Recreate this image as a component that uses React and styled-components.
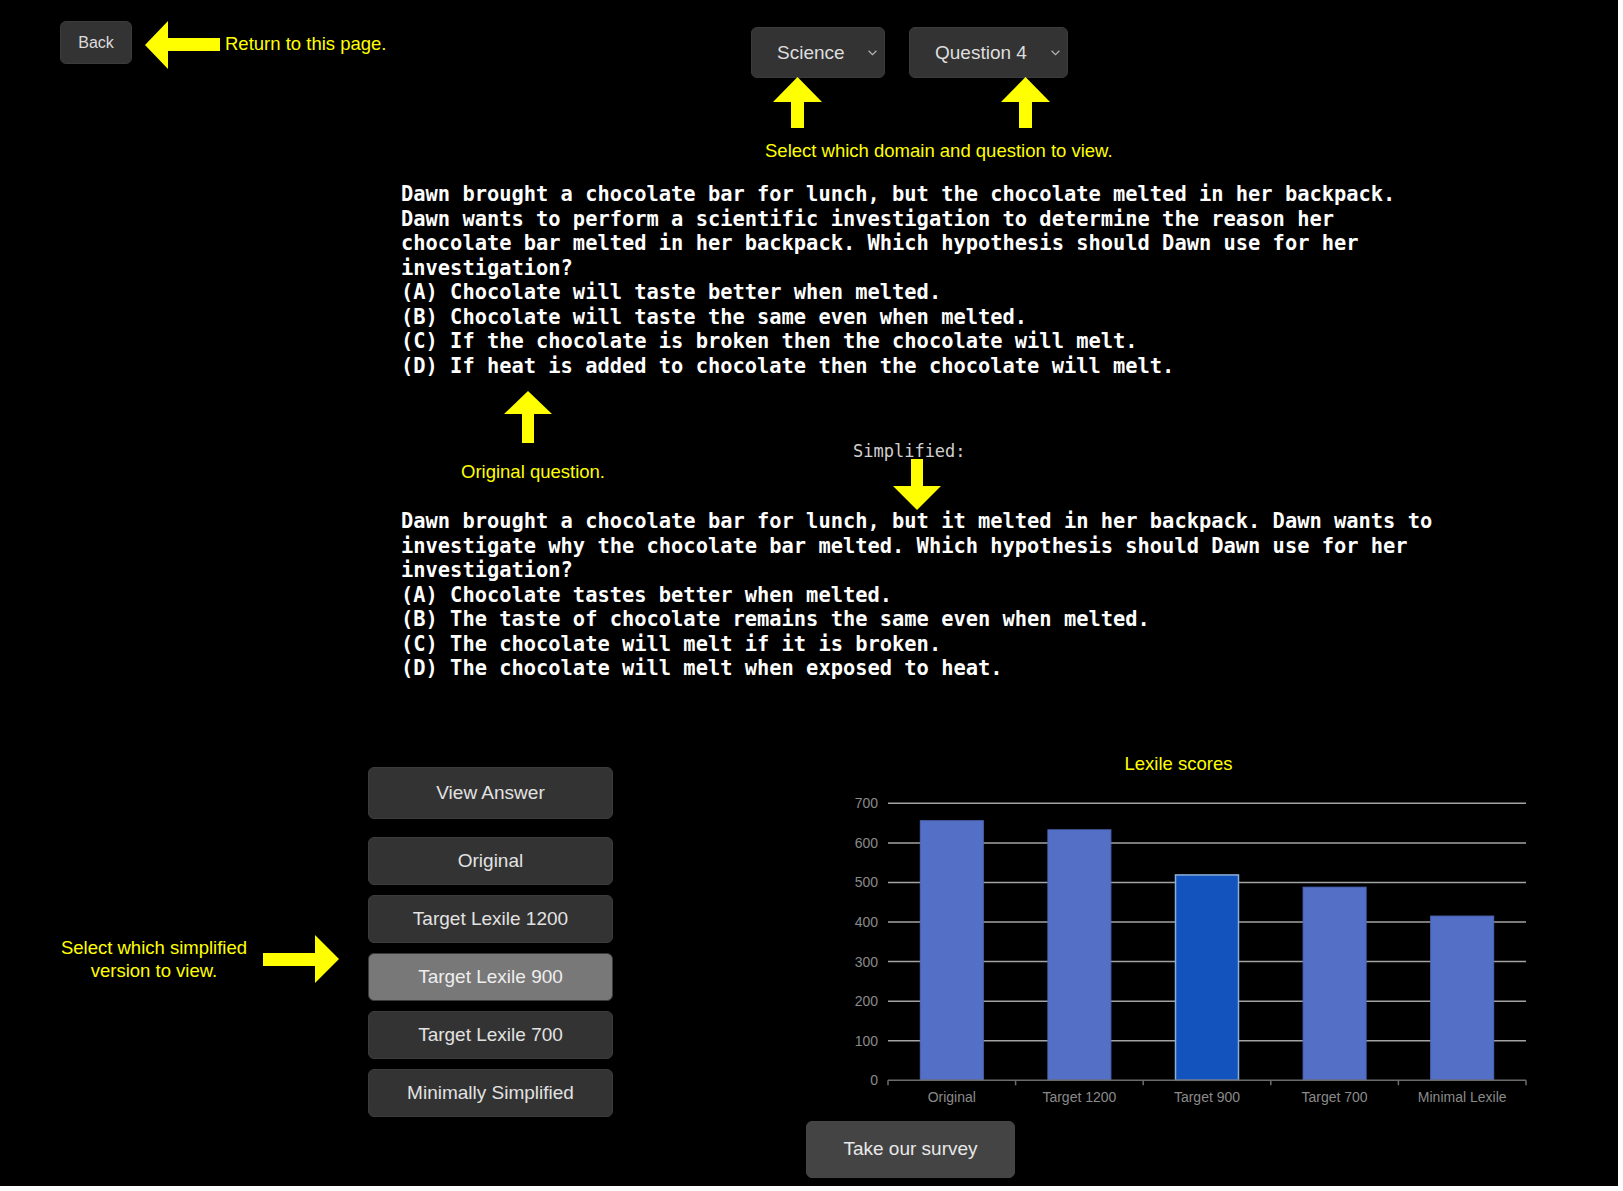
import React from "react";
import styled, { createGlobalStyle } from "styled-components";

const YELLOW = "#ffff00";

const GlobalStyle = createGlobalStyle`
  html, body { margin: 0; padding: 0; background: #ffffff; }
  #root { width: 1623px; }
  * { box-sizing: border-box; }
`;

const Page = styled.div`
  width: 1618px;
  height: 1186px;
  background: #000;
  font-family: "Liberation Sans", Arial, sans-serif;
  overflow: hidden;
  display: flex;
  flex-direction: column;
`;

const Header = styled.header`
  display: grid;
  grid-template-columns: 751px auto;
  align-items: start;
  height: 182px;
  padding-top: 21px;
`;

const BackNote = styled.div`
  display: flex;
  align-items: flex-start;
  padding-left: 60px;
`;

const DarkButton = styled.button`
  display: flex;
  align-items: center;
  justify-content: center;
  border: 1px solid #3b3b3b;
  border-radius: 6px;
  background: ${(p) => (p.$active ? "#787878" : "#333333")};
  color: #e2e2e2;
  font-family: "Liberation Sans", Arial, sans-serif;
  padding: 0;
  cursor: pointer;
`;

const BackButton = styled(DarkButton)`
  width: 72px;
  height: 43px;
  font-size: 16px;
  color: #dcdcdc;
`;

const Note = styled.span`
  color: ${YELLOW};
  font-size: 18.5px;
  line-height: 21px;
  white-space: nowrap;
`;

const ReturnNote = styled(Note)`
  margin-left: 5px;
  margin-top: 12px;
`;

const ArrowSvg = styled.svg`
  display: block;
  flex: none;
  fill: ${YELLOW};
  margin-left: ${(p) => p.$ml || 0}px;
  margin-top: ${(p) => p.$mt || 0}px;
`;

const SelectsColumn = styled.div`
  display: flex;
  flex-direction: column;
  margin-top: 6px;
`;

const SelectRow = styled.div`
  display: flex;
  gap: 24px;
`;

const Select = styled(DarkButton)`
  width: ${(p) => p.$w}px;
  height: 51px;
  justify-content: space-between;
  padding: 0 7px 0 25px;
  font-size: 19px;
  color: #dedede;
`;

const ArrowRow = styled.div`
  display: flex;
  height: 51px;
  margin-top: -1px;
`;

const Caption = styled(Note)`
  margin-top: 12px;
  margin-left: 14px;
`;

const QuestionText = styled.div`
  width: 1040px;
  margin-left: 401px;
  color: #ffffff;
  font-family: "DejaVu Sans Mono", "Liberation Mono", monospace;
  font-weight: bold;
  font-size: 20.4px;
  line-height: 24.5px;
  white-space: pre-wrap;
`;

const AnnotationRow = styled.div`
  display: flex;
  align-items: flex-start;
  height: 131px;
  padding-left: 461px;
`;

const OriginalNote = styled.div`
  display: flex;
  flex-direction: column;
  align-items: flex-start;
  padding-top: 13px;
`;

const OriginalLabel = styled(Note)`
  margin-top: 18px;
`;

const SimplifiedNote = styled.div`
  display: flex;
  flex-direction: column;
  align-items: flex-start;
  margin-left: 248px;
  margin-top: 63px;
`;

const SimplifiedLabel = styled.span`
  font-family: "DejaVu Sans Mono", "Liberation Mono", monospace;
  font-size: 17px;
  line-height: 20px;
  color: #d0d0d0;
`;

const BottomSection = styled.div`
  display: flex;
  align-items: flex-start;
  margin-top: 64px;
  padding-left: 54px;
`;

const SideNote = styled.div`
  display: flex;
  align-items: center;
  margin-top: 190px;
`;

const SideNoteText = styled(Note)`
  width: 200px;
  text-align: center;
  line-height: 23px;
  white-space: normal;
`;

const VersionList = styled.div`
  display: flex;
  flex-direction: column;
  width: 245px;
  margin-left: 29px;
  margin-top: 22px;
`;

const VersionButton = styled(DarkButton)`
  height: ${(p) => (p.$tall ? 52 : 48)}px;
  margin-top: ${(p) => p.$gap}px;
  font-size: 19px;
  color: ${(p) => (p.$active ? "#eeeeee" : "#e2e2e2")};
`;

const ChartColumn = styled.div`
  display: flex;
  flex-direction: column;
  margin-left: 193px;
`;

const ChartSvg = styled.svg`
  display: block;
  font-family: "Liberation Sans", Arial, sans-serif;
`;

const SurveyButton = styled(DarkButton)`
  width: 209px;
  height: 57px;
  margin-top: 9px;
  background: #444444;
  border-color: #474747;
  font-size: 19px;
  color: #e8e8e8;
`;

const Chevron = () => (
  <svg width="9" height="6" viewBox="0 0 9 6" fill="none" style={{ flex: "none" }}>
    <polyline points="0.6,0.8 4.5,4.6 8.4,0.8" stroke="#b5b5b5" strokeWidth="1.2" />
  </svg>
);

const LeftArrow = () => (
  <ArrowSvg width="75" height="48" viewBox="0 0 75 48" $ml={13}>
    <polygon points="0,24 23,0 23,17 75,17 75,30 23,30 23,48" />
  </ArrowSvg>
);

const UpArrow = ({ ml = 0, w = 49, h = 51, head = 25, shaft = 13 }) => {
  const c = w / 2;
  const s0 = c - shaft / 2;
  const s1 = c + shaft / 2;
  return (
    <ArrowSvg width={w} height={h} viewBox={`0 0 ${w} ${h}`} $ml={ml}>
      <polygon points={`${c},0 ${w},${head} ${s1},${head} ${s1},${h} ${s0},${h} ${s0},${head} 0,${head}`} />
    </ArrowSvg>
  );
};

const DownArrow = ({ ml = 0, mt = 0, w = 48, h = 51, head = 24, shaft = 12 }) => {
  const c = w / 2;
  const s0 = c - shaft / 2;
  const s1 = c + shaft / 2;
  const b = h - head;
  return (
    <ArrowSvg width={w} height={h} viewBox={`0 0 ${w} ${h}`} $ml={ml} $mt={mt}>
      <polygon points={`${s0},0 ${s1},0 ${s1},${b} ${w},${b} ${c},${h} 0,${b} ${s0},${b}`} />
    </ArrowSvg>
  );
};

const RightArrow = () => (
  <ArrowSvg width="76" height="48" viewBox="0 0 76 48" $ml={9}>
    <polygon points="0,18 52,18 52,0 76,24 52,48 52,31 0,31" />
  </ArrowSvg>
);

const bars = [
  { label: "Original", value: 656 },
  { label: "Target 1200", value: 633 },
  { label: "Target 900", value: 519, active: true },
  { label: "Target 700", value: 488 },
  { label: "Minimal Lexile", value: 415 },
];

const LexileChart = () => {
  const left = 82;
  const right = 720;
  const base = 335.3;
  const k = 0.3957;
  const y = (v) => base - v * k;
  const cat = (right - left) / bars.length;
  const ticks = [700, 600, 500, 400, 300, 200, 100];
  return (
    <ChartSvg width="740" height="367" viewBox="0 0 740 367">
      <text x="372.5" y="18" fill={YELLOW} fontSize="18.5" textAnchor="middle" dominantBaseline="central">
        Lexile scores
      </text>
      {ticks.map((t) => (
        <line key={t} x1={left} x2={right} y1={y(t)} y2={y(t)} stroke="#a3a3a3" strokeWidth="1.5" />
      ))}
      {[...ticks, 0].map((t) => (
        <text key={`l${t}`} x="72" y={y(t)} fill="#8a8a8a" fontSize="14" textAnchor="end" dominantBaseline="central">
          {t}
        </text>
      ))}
      {bars.map((b, i) => {
        const x = left + i * cat + 32.3;
        return (
          <rect
            key={b.label}
            x={x}
            y={y(b.value)}
            width="63"
            height={base - y(b.value)}
            fill={b.active ? "#1253bd" : "#5470c6"}
            stroke={b.active ? "#8db0d8" : "#4d68bb"}
            strokeWidth={b.active ? 1.5 : 1}
          />
        );
      })}
      <line x1={left} x2={right} y1={base} y2={base} stroke="#6c6c6c" strokeWidth="1.5" />
      {Array.from({ length: bars.length + 1 }).map((_, i) => (
        <line key={`t${i}`} x1={left + i * cat} x2={left + i * cat} y1={base} y2={base + 5} stroke="#6c6c6c" strokeWidth="1.5" />
      ))}
      {bars.map((b, i) => (
        <text key={`x${b.label}`} x={left + i * cat + cat / 2} y="352" fill="#8a8a8a" fontSize="14" textAnchor="middle" dominantBaseline="central">
          {b.label}
        </text>
      ))}
    </ChartSvg>
  );
};

const original = `Dawn brought a chocolate bar for lunch, but the chocolate melted in her backpack. Dawn wants to perform a scientific investigation to determine the reason her chocolate bar melted in her backpack. Which hypothesis should Dawn use for her investigation?
(A) Chocolate will taste better when melted.
(B) Chocolate will taste the same even when melted.
(C) If the chocolate is broken then the chocolate will melt.
(D) If heat is added to chocolate then the chocolate will melt.`;

const simplified = `Dawn brought a chocolate bar for lunch, but it melted in her backpack. Dawn wants to investigate why the chocolate bar melted. Which hypothesis should Dawn use for her investigation?
(A) Chocolate tastes better when melted.
(B) The taste of chocolate remains the same even when melted.
(C) The chocolate will melt if it is broken.
(D) The chocolate will melt when exposed to heat.`;

const versions = [
  { label: "Original" },
  { label: "Target Lexile 1200" },
  { label: "Target Lexile 900", active: true },
  { label: "Target Lexile 700" },
  { label: "Minimally Simplified" },
];

export default function App() {
  return (
    <>
      <GlobalStyle />
      <Page>
        <Header>
          <BackNote>
            <BackButton>Back</BackButton>
            <LeftArrow />
            <ReturnNote>Return to this page.</ReturnNote>
          </BackNote>
          <SelectsColumn>
            <SelectRow>
              <Select $w={134}>
                Science
                <Chevron />
              </Select>
              <Select $w={159}>
                Question 4
                <Chevron />
              </Select>
            </SelectRow>
            <ArrowRow>
              <UpArrow ml={22} />
              <UpArrow ml={179} />
            </ArrowRow>
            <Caption>Select which domain and question to view.</Caption>
          </SelectsColumn>
        </Header>

        <QuestionText>{original}</QuestionText>

        <AnnotationRow>
          <OriginalNote>
            <UpArrow ml={43} w={48} h={52} head={23} shaft={12} />
            <OriginalLabel>Original question.</OriginalLabel>
          </OriginalNote>
          <SimplifiedNote>
            <SimplifiedLabel>Simplified:</SimplifiedLabel>
            <DownArrow ml={40} mt={-2} w={48} h={51} head={24} shaft={12} />
          </SimplifiedNote>
        </AnnotationRow>

        <QuestionText>{simplified}</QuestionText>

        <BottomSection>
          <SideNote>
            <SideNoteText>
              Select which simplified
              <br />
              version to view.
            </SideNoteText>
            <RightArrow />
          </SideNote>
          <VersionList>
            <VersionButton $tall $gap={0}>View Answer</VersionButton>
            {versions.map((v, i) => (
              <VersionButton key={v.label} $active={v.active} $gap={i === 0 ? 18 : 10}>
                {v.label}
              </VersionButton>
            ))}
          </VersionList>
          <ChartColumn>
            <LexileChart />
            <SurveyButton>Take our survey</SurveyButton>
          </ChartColumn>
        </BottomSection>
      </Page>
    </>
  );
}
